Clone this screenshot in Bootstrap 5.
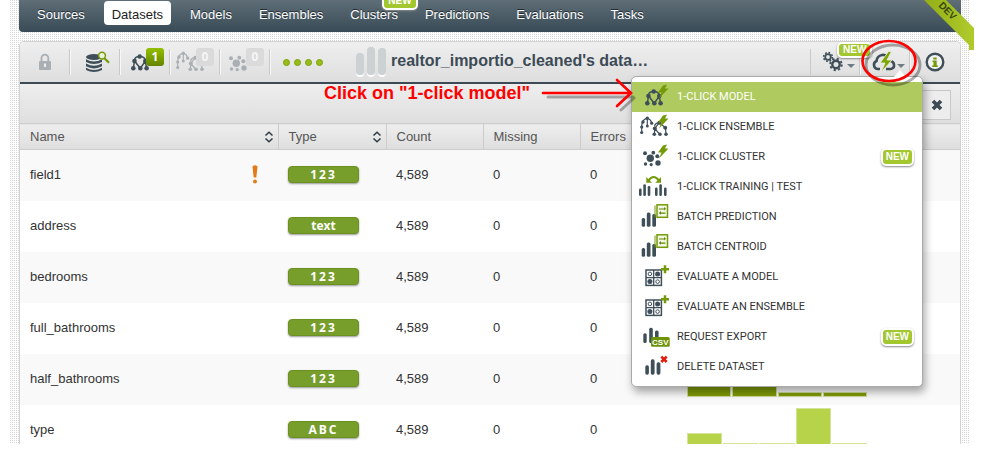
<!DOCTYPE html>
<html lang="en">
<head>
<meta charset="utf-8">
<meta name="viewport" content="width=device-width, initial-scale=1">
<title>Datasets</title>
<link href="https://cdn.jsdelivr.net/npm/bootstrap@5.3.0/dist/css/bootstrap.min.css" rel="stylesheet">
<style>
  body { font: 13px/20px "Liberation Sans", Arial, sans-serif; color: #333; background: #fff; overflow: hidden; }
  svg { display: block; flex: none; }
  .ink { color: #3f4f59; }
  .page-shell { margin: 0 13px 0 10px; position: relative; }
  .page-view { height: calc(100vh - 19px); overflow: hidden; padding: 0 8px 0 9px;
    background: conic-gradient(#fff 75%, #d6d6d6 0) 0 0 / 2px 2px; }
  .top-nav { height: 32px; padding: 0 10px; gap: 11px; border-radius: 0 0 4px 4px; background: linear-gradient(#5f6e77, #384b56); }
  .top-nav .nav-link { padding: 5px 8px 0; height: 24px; margin-top: 1px; color: #fff; border-radius: 4px; text-shadow: 0 -1px 0 #222c33; position: relative; line-height: 18px; }
  .top-nav .nav-link.active { background: #fff; color: #222; text-shadow: none; }
  .new-tag { background: #a3c72f; color: #fff; border: 2px solid #fff; border-radius: 5px; font-weight: 700; font-size: 10px; line-height: 14px; padding: 0 4px; box-shadow: 0 1px 2px #888; }
  .nav-tag { position: absolute; left: 40px; top: -9px; text-shadow: none; }
  .main-panel { margin-top: 9px; position: relative; background: #fff; border-radius: 5px 5px 0 0; border: 1px solid #d2d2d2; border-bottom: 0; }
  .tool-row { height: 42px; border-bottom: 2px solid #3b4a54; background: linear-gradient(#efefef, #dedede); border-radius: 5px 5px 0 0; }
  .tool-cell { width: 50px; height: 26px; border: 0; border-right: 1px solid #c9c9c9; box-shadow: 1px 0 0 #f8f8f8; background: none; padding: 0; display: flex; align-items: center; position: relative; color: #3f4f59; }
  .tool-cell.faded { color: #a9afb3; }
  .tool-cell.last-cell { border-right: 0; box-shadow: none; }
  .tool-cell.first-cell { border-left: 1px solid #c9c9c9; }
  .count-tag { position: absolute; left: 26px; top: -1px; width: 18px; height: 18px; border-radius: 3px; background: linear-gradient(#93bf00, #648400); color: #fff; font: 700 12px/17px "Open Sans", sans-serif; text-align: center; }
  .faded .count-tag { background: #dadada; color: #f6f6f6; }
  .dot-group { gap: 4px; padding-left: 13px; }
  .dot-group i { width: 7px; height: 7px; border-radius: 50%; background: #97bd1d; border: 1px solid #7da200; }
  .title-bars { margin-left: 33px; }
  .panel-title { font-size: 16px; line-height: 20px; font-weight: 700; color: #3c4b56; margin: 0 0 3px 5px; }
  .filter-row { height: 39px; padding: 6px 9px 3px; background: linear-gradient(#eee, #dfdfdf); }
  .close-btn { width: 29px; height: 30px; padding: 0; border: 1px solid #c8c8c8; border-radius: 0; background: #ededed; display: flex; align-items: center; justify-content: center; color: #3b4a54; }
  .field-table { width: 100%; table-layout: fixed; margin: 0; }
  .field-table th { height: 26px; padding: 0 10px; font-weight: 400; color: #555; background: linear-gradient(#eee, #dedede); border: solid #ccc; border-width: 1px 1px 1px 0; }
  .field-table th:last-child { border-right: 0; }
  .field-table td { height: 51px; padding: 0 10px; vertical-align: middle; }
  .field-table th:nth-child(n+2) { padding-left: 9px; }
  .field-table td:nth-child(n+2) { padding-left: 9px; }
  .field-table tbody tr:nth-child(odd) { background: #f9f9f9; }
  .col-name { width: 258px; } .col-type { width: 108px; } .col-num { width: 97px; }
  .field-table th:nth-child(n+2), .field-table td:nth-child(n+2) { padding-left: 10px; }
  .sort-icon { margin-right: -6px; }
  .type-tag { display: block; width: 71px; height: 17px; margin-bottom: 2px; border-radius: 4px; background: #779e2b; border: 1px solid #6b9120; box-shadow: 0 1px 2px #999; color: #fff; text-align: center; font: 700 12px/15px "Open Sans", sans-serif; }
  .spread { letter-spacing: 2px; }
  .bars { height: 51px; gap: 1px; padding-bottom: 8px; width: 180px; }
  .bars i { flex: 1; background: #7e9b06; border: 1px solid #cfdb9c; }
  .bars.pale i { background: #b6d34a; border-color: #d4e59a; }
  .click-menu { display: block; position: absolute; right: 37px; top: 34px; width: 292px; padding: 5px 0 4px; margin: 0; border: 1px solid #aaa; border-radius: 5px; box-shadow: 2px 5px 9px rgba(0,0,0,.35); font: 11px/30px Roboto, sans-serif; background: #fff; }
  .click-menu::before { content: ""; position: absolute; right: 16px; top: -7px; border: 6px solid transparent; border-top: 0; border-bottom: 7px solid #fff; }
  .click-menu .dropdown-item { height: 30px; padding: 0 8px 0 6px; display: flex; align-items: center; color: #333; }
  .click-menu .dropdown-item.active { background: #afca5e; color: #fff; }
  .click-menu .item-text { margin-left: 7px; flex: 1; }
  .click-menu .new-tag { font-family: "Liberation Sans", Arial, sans-serif; padding: 0 3px; }
  .gear-tag { position: absolute; left: 26px; top: -7px; line-height: 12px; z-index: 1; }
  .note { position: absolute; left: 304px; top: 40px; color: #f00; font-weight: 700; font-size: 18px; line-height: 22px; white-space: nowrap; }
  .note-arrow { position: absolute; left: 521px; top: 34px; z-index: 1100; }
  .note-ring { position: absolute; right: 35px; top: -5px; z-index: 1100; pointer-events: none; }
  .dev-ribbon { position: absolute; right: -5px; top: 0; z-index: 5; }
</style>
<script src="https://cdn.jsdelivr.net/npm/bootstrap@5.3.0/dist/js/bootstrap.bundle.min.js"></script>
</head>
<body>
<svg width="0" height="0" class="position-absolute" aria-hidden="true">
  <defs>
    <symbol id="bolt" viewBox="-2 0 32 30"><path d="M23 3.500 27 2.500 25 6.500 28.500 6.500 19 16.500 21.500 10.500 18 10.500z" fill="#749a0a"/></symbol>
    <symbol id="tree" viewBox="-2 0 32 30">
      <path d="M8.500 14 7.300 21.300M19.300 14 20.600 21.300M8.500 14 14.300 21.300M19.300 14 14.300 21.300M8.500 13Q9 9.500 13.700 9.500 18.500 9.500 19.300 13" fill="none" stroke="currentColor" stroke-width="1.500"/>
      <g fill="currentColor"><circle cx="13.700" cy="9.500" r="2.200"/><circle cx="8.500" cy="14" r="2.300"/><circle cx="19.300" cy="14" r="2.300"/><circle cx="7.300" cy="21.300" r="2.300"/><circle cx="14.300" cy="21.300" r="2.300"/><circle cx="20.600" cy="21.300" r="2.300"/></g>
    </symbol>
    <symbol id="forest" viewBox="-2 0 32 30">
      <path d="M1.700 20V14Q2 7 7.300 6.300 11 7 11.700 11.700M7.300 6.300V13M19.300 10.700 14.800 16.500 14.300 22.600M19.300 10.700 25.500 15.700 26 22.600M14.800 16.500 20 22.600M14.500 14.500Q15 11 19 10.700" fill="none" stroke="currentColor" stroke-width="1.200"/>
      <g fill="currentColor"><circle cx="7.300" cy="6.300" r="1.700"/><circle cx="3" cy="10" r="1.700"/><circle cx="1.700" cy="15" r="1.600"/><circle cx="1.700" cy="20.500" r="1.600"/><circle cx="7.300" cy="14" r="1.500"/><circle cx="11.700" cy="11.200" r="1.600"/><circle cx="19.300" cy="10.700" r="2"/><circle cx="14.800" cy="16.500" r="2"/><circle cx="25.200" cy="15.700" r="2"/><circle cx="14.300" cy="22.300" r="1.800"/><circle cx="20" cy="22.300" r="1.800"/><circle cx="26" cy="22.300" r="1.800"/></g>
    </symbol>
    <symbol id="cluster" viewBox="-2 0 32 30"><g fill="currentColor"><circle cx="10.300" cy="16.300" r="3.700"/><circle cx="5" cy="11.300" r="2"/><circle cx="13.300" cy="10.700" r="1.900"/><circle cx="17.300" cy="14.300" r="2"/><circle cx="5.500" cy="22" r="1.700"/><circle cx="11.200" cy="22.600" r="1.600"/><circle cx="18" cy="21" r="2.700"/></g></symbol>
    <symbol id="split" viewBox="-2 0 32 30">
      <g fill="currentColor"><rect x="-1" y="16.500" width="2.600" height="7.500" rx="1.200"/><rect x="3.300" y="12.300" width="2.600" height="11.700" rx="1.200"/><rect x="7.700" y="14" width="2.600" height="10" rx="1.200"/><rect x="15" y="15.500" width="2.600" height="8.500" rx="1.200"/><rect x="19.300" y="12.300" width="2.600" height="11.700" rx="1.200"/><rect x="24" y="15.500" width="2.600" height="8.500" rx="1.200"/></g>
      <path d="M8.500 8.500Q13.500 1.500 19 8.500" fill="none" stroke="#749a0a" stroke-width="2.200"/><path d="M6.300 5V10.700H12zM21 5V10.700H15.300z" fill="#749a0a"/>
    </symbol>
    <symbol id="batch" viewBox="-2 0 32 30">
      <g fill="currentColor"><rect x="1.700" y="16" width="3.400" height="8.700" rx="1.500"/><rect x="6.800" y="10.500" width="3.700" height="14.200" rx="1.500"/><rect x="12.300" y="12" width="3.700" height="12.700" rx="1.500"/></g>
      <path d="M15 3.500V15.500" fill="none" stroke="#749a0a"/><rect x="17" y="2.800" width="10.500" height="12.500" fill="#f4f9e6" stroke="#749a0a" stroke-width="1.500"/><path d="M19 6.500H24V5L26 6.800 24 8.500V7.500H19zM25.500 10.500H21V9L18.800 11 21 12.800V11.800H25.500z" fill="#5f8503"/>
    </symbol>
    <symbol id="grid4" viewBox="-2 0 32 30">
      <rect x="6" y="8" width="15.400" height="15.400" fill="#fff" stroke="currentColor" stroke-width="1.500"/><path d="M13.700 8V23.400M6 15.700H21.400" stroke="currentColor" stroke-width="1.300"/>
      <g fill="none" stroke="currentColor"><circle cx="9.900" cy="11.900" r="1.800"/><circle cx="17.600" cy="19.600" r="1.800"/></g><g fill="currentColor"><circle cx="17.600" cy="11.900" r="2.500"/><circle cx="9.900" cy="19.600" r="2.500"/></g>
      <path d="M25 3.300V11.300M21 7.300H29" stroke="#749a0a" stroke-width="2.500"/>
    </symbol>
    <symbol id="export" viewBox="-2 0 32 30">
      <g fill="currentColor"><rect x="3.300" y="11.300" width="3.400" height="9.700" rx="1.500"/><rect x="9.200" y="5.700" width="3.600" height="15.300" rx="1.500"/><rect x="15" y="8.500" width="3.600" height="12" rx="1.500"/></g>
      <rect x="11" y="15" width="18.700" height="9.800" rx="1.500" fill="#6e9208"/><text x="20.300" y="22.700" text-anchor="middle" font-family="Liberation Sans, Arial, sans-serif" font-weight="700" font-size="8" fill="#fff">CSV</text>
    </symbol>
    <symbol id="erase" viewBox="-2 0 32 30">
      <g fill="currentColor"><rect x="5.300" y="13.300" width="3.600" height="9.400" rx="1.600"/><rect x="10.800" y="7.300" width="3.800" height="15.400" rx="1.600"/><rect x="16.600" y="10.300" width="3.800" height="12.400" rx="1.600"/></g>
      <path d="M21.300 4.600 26.700 10M26.700 4.600 21.300 10" stroke="#e01a0c" stroke-width="2.600"/>
    </symbol>
    <symbol id="sort" viewBox="0 0 10 12"><path d="M1.500 4.500 5 1.300 8.500 4.500M1.500 7.500 5 10.700 8.500 7.500" fill="none" stroke="#2c3a43" stroke-width="1.500"/></symbol>
  </defs>
</svg>

<div class="page-shell">
  <div class="page-view">
    <nav class="top-nav nav flex-nowrap">
      <a class="nav-link" href="#">Sources</a>
      <a class="nav-link active" href="#" aria-current="page">Datasets</a>
      <a class="nav-link" href="#">Models</a>
      <a class="nav-link" href="#">Ensembles</a>
      <a class="nav-link" href="#">Clusters<span class="new-tag nav-tag">NEW</span></a>
      <a class="nav-link" href="#">Predictions</a>
      <a class="nav-link" href="#">Evaluations</a>
      <a class="nav-link" href="#">Tasks</a>
    </nav>

    <main class="main-panel">
      <div class="tool-row d-flex align-items-center">
        <button class="tool-cell faded justify-content-center" aria-label="Privacy"><svg width="14" height="18" viewBox="0 0 14 18"><path d="M3.500 9V5a3.300 3.300 0 0 1 6.800 0v4" fill="none" stroke="currentColor" stroke-width="1.800"/><rect x="1" y="8" width="12" height="9" rx="1" fill="currentColor"/><path d="M7 10.500v3.500" stroke="#eee" stroke-width="2"/></svg></button>
        <button class="tool-cell ps-3" aria-label="Source"><svg width="25" height="22" viewBox="2 0 25 22"><g fill="currentColor"><ellipse cx="10" cy="6" rx="8" ry="3"/><path d="M2 8.200q8 4.500 16 0v2.800q-8 4.200-16 0zM2 12.500q8 4.500 16 0v2.800q-8 4.200-16 0zM2 16.800q8 4.500 16 0v2.200q-8 4-16 0z"/></g><circle cx="18" cy="4.600" r="3.400" fill="#eef3df" stroke="#749a0a" stroke-width="1.500"/><path d="M20.400 7.200 25 11.700" stroke="#749a0a" stroke-width="2.200"/></svg></button>
        <button class="tool-cell ps-1" aria-label="Models"><svg width="32" height="30"><use href="#tree"/></svg><span class="count-tag">1</span></button>
        <button class="tool-cell faded ps-1" aria-label="Ensembles"><svg width="32" height="30"><use href="#forest"/></svg><span class="count-tag">0</span></button>
        <button class="tool-cell faded ps-1" aria-label="Clusters"><svg width="32" height="30"><use href="#cluster"/></svg><span class="count-tag">0</span></button>
        <div class="dot-group d-flex"><i></i><i></i><i></i><i></i></div>
        <svg class="title-bars" width="30" height="32" viewBox="0 0 30 32"><g fill="#fff"><rect y="8" width="8" height="23" rx="4"/><rect x="11" y="2" width="8" height="29" rx="4"/><rect x="22" y="3" width="8" height="28" rx="4"/></g><g fill="#ccd1d3"><rect y="7" width="8" height="22" rx="3.500"/><rect x="11" y="1" width="8" height="28" rx="3.500"/><rect x="22" y="2" width="8" height="27" rx="3.500"/></g></svg>
        <h1 class="panel-title text-truncate">realtor_importio_cleaned's data…</h1>
        <div class="d-flex ms-auto">
          <button class="tool-cell first-cell ps-2" aria-label="Configure">
            <svg width="38" height="24" viewBox="0 0 38 24"><g fill="none" stroke="currentColor"><circle cx="9" cy="7" r="2.800" stroke-width="1.800"/><circle cx="9" cy="7" r="4.400" stroke-width="1.600" stroke-dasharray="1.700 1.750"/><circle cx="17" cy="14.500" r="3.700" stroke-width="2.400"/><circle cx="17" cy="14.500" r="5.700" stroke-width="2" stroke-dasharray="2.200 2.270"/></g><path d="M28 14h8l-4 4z" fill="#6d7b85"/></svg>
            <span class="new-tag gear-tag">NEW</span>
          </button>
          <button class="tool-cell ps-2" aria-label="One-click actions" aria-expanded="true">
            <svg width="40" height="24" viewBox="0 0 40 24"><path d="M12 19H9.500A4.200 4.200 0 0 1 8.500 11Q9 6 14 5q3-.5 5 1.500M18 19h4.500q4-.5 3.500-4.500-.5-3-3.500-3.500" fill="none" stroke="currentColor" stroke-width="2.600"/><path d="M20.500 1.500 12 13h5L13 22.500 24 10H19L23.500 1.500z" fill="#7da500" stroke="#eee" stroke-width=".8"/><path d="M29 14h8l-4 4z" fill="#6d7b85"/></svg>
          </button>
          <button class="tool-cell last-cell justify-content-center" aria-label="Information"><svg width="20" height="20" viewBox="0 0 20 20"><circle cx="10" cy="10" r="8.300" fill="#f3f3f3" stroke="currentColor" stroke-width="2.400"/><path d="M8.300 5.500h3.400v2H8.300zM7.500 8.500h4.200v4.700h1V15H7.300v-1.800h1.200V10h-1z" fill="#749a0a"/></svg></button>
        </div>
      </div>

      <div class="filter-row d-flex justify-content-end">
        <button class="close-btn" aria-label="Close"><svg width="12" height="12" viewBox="0 0 12 12"><path d="M2 2 10 10M10 2 2 10" stroke="currentColor" stroke-width="3.600"/></svg></button>
      </div>

      <table class="field-table">
        <colgroup><col class="col-name"><col class="col-type"><col class="col-num"><col class="col-num"><col class="col-num"><col></colgroup>
        <thead>
          <tr>
            <th scope="col"><div class="d-flex justify-content-between align-items-center">Name<svg class="sort-icon" width="10" height="12"><use href="#sort"/></svg></div></th>
            <th scope="col"><div class="d-flex justify-content-between align-items-center">Type<svg class="sort-icon" width="10" height="12"><use href="#sort"/></svg></div></th>
            <th scope="col">Count</th><th scope="col">Missing</th><th scope="col">Errors</th><th scope="col"></th>
          </tr>
        </thead>
        <tbody>
          <tr><td><div class="d-flex justify-content-between align-items-center pe-2">field1<svg width="10" height="20" viewBox="0 0 10 20"><path d="M2.500 1.500Q5-1 7.500 1.500L6.300 12.500H3.700z" fill="#e27b18"/><circle cx="5" cy="16.500" r="2" fill="#e27b18"/></svg></div></td><td><span class="type-tag spread">123</span></td><td>4,589</td><td>0</td><td>0</td><td></td></tr>
          <tr><td>address</td><td><span class="type-tag">text</span></td><td>4,589</td><td>0</td><td>0</td><td></td></tr>
          <tr><td>bedrooms</td><td><span class="type-tag spread">123</span></td><td>4,589</td><td>0</td><td>0</td><td></td></tr>
          <tr><td>full_bathrooms</td><td><span class="type-tag spread">123</span></td><td>4,589</td><td>0</td><td>0</td><td></td></tr>
          <tr><td>half_bathrooms</td><td><span class="type-tag spread">123</span></td><td>4,589</td><td>0</td><td>0</td><td><div class="bars d-flex align-items-end"><i style="height:30px"></i><i style="height:24px"></i><i style="height:5px"></i><i style="height:5px"></i></div></td></tr>
          <tr><td>type</td><td><span class="type-tag spread">ABC</span></td><td>4,589</td><td>0</td><td>0</td><td><div class="bars pale d-flex align-items-end"><i style="height:15px"></i><i style="height:5px"></i><i style="height:5px"></i><i style="height:40px"></i><i style="height:5px"></i></div></td></tr>
        </tbody>
      </table>

      <div class="click-menu dropdown-menu show">
        <a class="dropdown-item active" href="#"><svg class="ink" width="32" height="30"><use href="#tree"/><use href="#bolt"/></svg><span class="item-text">1-CLICK MODEL</span></a>
        <a class="dropdown-item" href="#"><svg class="ink" width="32" height="30"><use href="#forest"/><use href="#bolt"/></svg><span class="item-text">1-CLICK ENSEMBLE</span></a>
        <a class="dropdown-item" href="#"><svg class="ink" width="32" height="30"><use href="#cluster"/><use href="#bolt"/></svg><span class="item-text">1-CLICK CLUSTER</span><span class="new-tag">NEW</span></a>
        <a class="dropdown-item" href="#"><svg class="ink" width="32" height="30"><use href="#split"/></svg><span class="item-text">1-CLICK TRAINING | TEST</span></a>
        <a class="dropdown-item" href="#"><svg class="ink" width="32" height="30"><use href="#batch"/></svg><span class="item-text">BATCH PREDICTION</span></a>
        <a class="dropdown-item" href="#"><svg class="ink" width="32" height="30"><use href="#batch"/></svg><span class="item-text">BATCH CENTROID</span></a>
        <a class="dropdown-item" href="#"><svg class="ink" width="32" height="30"><use href="#grid4"/></svg><span class="item-text">EVALUATE A MODEL</span></a>
        <a class="dropdown-item" href="#"><svg class="ink" width="32" height="30"><use href="#grid4"/></svg><span class="item-text">EVALUATE AN ENSEMBLE</span></a>
        <a class="dropdown-item" href="#"><svg class="ink" width="32" height="30"><use href="#export"/></svg><span class="item-text">REQUEST EXPORT</span><span class="new-tag">NEW</span></a>
        <a class="dropdown-item" href="#"><svg class="ink" width="32" height="30"><use href="#erase"/></svg><span class="item-text">DELETE DATASET</span></a>
      </div>

      <div class="note">Click on "1-click model"</div>
      <svg class="note-arrow" width="100" height="40" viewBox="0 0 100 40"><path d="M7 21H92M80 34 93 22" fill="none" stroke="#000" stroke-opacity=".3" stroke-width="3" stroke-linecap="round"/><path d="M2 17H89M76 4 90 17 76 30" fill="none" stroke="#f00" stroke-width="2.600" stroke-linecap="round"/></svg>
      <svg class="note-ring" width="66" height="54" viewBox="0 0 66 54"><ellipse cx="34" cy="28" rx="27" ry="20" fill="none" stroke="#000" stroke-opacity=".32" stroke-width="3"/><ellipse cx="30" cy="24" rx="26.500" ry="20" fill="none" stroke="#f00" stroke-width="2.600"/></svg>
    </main>
  </div>
  <svg class="dev-ribbon" width="50" height="50" viewBox="0 0 50 50"><defs><linearGradient id="rib" x1="0" x2="1"><stop offset="0" stop-color="#93ae17"/><stop offset="1" stop-color="#afcb2b"/></linearGradient></defs><path d="M0 0H22L50 28V50H45V45z" fill="url(#rib)"/><text transform="translate(14 6) rotate(45)" font-family="Liberation Sans, Arial, sans-serif" font-weight="700" font-size="10" fill="#39480e">DEV</text></svg>
</div>
</body>
</html>
